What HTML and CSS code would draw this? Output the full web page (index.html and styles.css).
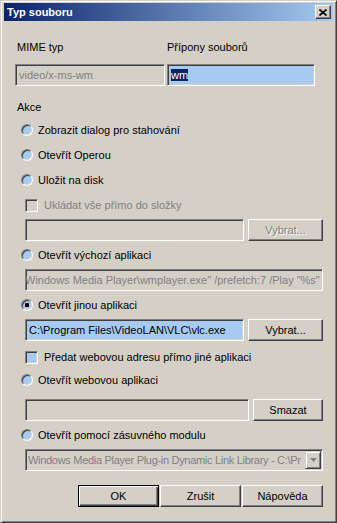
FILE: index.html
```html
<!DOCTYPE html>
<html lang="cs">
<head>
    <meta charset="UTF-8">
    <title>Typ souboru</title>
    <link rel="stylesheet" href="styles.css">
</head>
<body>
    <div class="window">
        <div class="titlebar">
            <span class="title">Typ souboru</span>
            <span class="close">
                <svg width="8" height="7" viewBox="0 0 8 7"><path d="M0.5 0.5 L7.5 6.5 M7.5 0.5 L0.5 6.5" stroke="#000" stroke-width="1.6" fill="none"/></svg>
            </span>
        </div>

        <div class="dialog">
            <div class="mime">
                <span class="label first">MIME typ</span>
                <span class="label">Přípony souborů</span>
                <div class="field disabled">video/x-ms-wm</div>
                <div class="field active"><span class="selected">wm</span></div>
            </div>

            <div class="group-title">Akce</div>

            <div class="actions">
                <div class="option"><span class="radio"></span>Zobrazit dialog pro stahování</div>
                <div class="option"><span class="radio"></span>Otevřít Operou</div>
                <div class="option"><span class="radio"></span>Uložit na disk</div>
                <div class="option check disabled"><span class="checkbox"></span>Ukládat vše přímo do složky</div>
                <div class="row">
                    <div class="field disabled"></div>
                    <button class="btn pick" disabled>Vybrat...</button>
                </div>

                <div class="option after"><span class="radio"></span>Otevřít výchozí aplikaci</div>
                <div class="row">
                    <div class="field disabled"><span class="cut">Windows Media Player\wmplayer.exe" /prefetch:7 /Play "%s"</span></div>
                </div>

                <div class="option after"><span class="radio checked"></span>Otevřít jinou aplikaci</div>
                <div class="row">
                    <div class="field active">C:\Program Files\VideoLAN\VLC\vlc.exe</div>
                    <button class="btn pick">Vybrat...</button>
                </div>
                <div class="option check after-check"><span class="checkbox on"></span>Předat webovou adresu přímo jiné aplikaci</div>

                <div class="option"><span class="radio"></span>Otevřít webovou aplikaci</div>
                <div class="row web">
                    <div class="field disabled"></div>
                    <button class="btn clear">Smazat</button>
                </div>

                <div class="option after"><span class="radio"></span>Otevřít pomocí zásuvného modulu</div>
                <div class="row">
                    <div class="select">
                        <span class="select-text">Windows Media Player Plug-in Dynamic Link Library - C:\Pr</span>
                        <span class="arrow">
                            <svg width="7" height="4" viewBox="0 0 7 4"><path d="M0 0 H7 L3.5 4 Z" fill="#808080"/></svg>
                        </span>
                    </div>
                </div>
            </div>

            <div class="buttons">
                <button class="btn default">OK</button>
                <button class="btn">Zrušit</button>
                <button class="btn">Nápověda</button>
            </div>
        </div>
    </div>
</body>
</html>
```

FILE: styles.css
```css
body {
    margin: 0;
    padding: 0;
    font-family: 'Liberation Sans', Arial, sans-serif;
    font-size: 11px;
    color: #000;
    background: #d4d0c8;
}

.window {
    width: 337px;
    height: 523px;
    box-sizing: border-box;
    background: #d4d0c8;
    border: 1px solid;
    border-color: #d4d0c8 #404040 #404040 #d4d0c8;
    box-shadow: inset 1px 1px #fff, inset -1px -1px #808080;
    padding: 2px 3px 3px 3px;
}

.titlebar {
    height: 18px;
    background: linear-gradient(to right, #0a246a, #a6caf0);
    display: flex;
    align-items: center;
    justify-content: space-between;
}

.title {
    color: #fff;
    font-weight: bold;
    font-size: 11px;
    padding-left: 3px;
}

.close {
    width: 16px;
    height: 14px;
    box-sizing: border-box;
    margin-right: 2px;
    background: #d4d0c8;
    border: 1px solid;
    border-color: #fff #404040 #404040 #fff;
    box-shadow: inset -1px -1px #808080;
    display: flex;
    align-items: center;
    justify-content: center;
}

.dialog {
    padding: 0 10px 0 11px;
}

.mime {
    display: grid;
    grid-template-columns: 150px 148px;
    column-gap: 2px;
    row-gap: 10px;
    margin-top: 19px;
}

.label {
    height: 14px;
    line-height: 14px;
}

.label.first {
    padding-left: 2px;
}

.field {
    height: 22px;
    min-width: 0;
    box-sizing: border-box;
    background: #fff;
    border: 1px solid;
    border-color: #808080 #fff #fff #808080;
    box-shadow: inset 1px 1px #404040, inset -1px -1px #d4d0c8;
    padding: 0 3px;
    display: flex;
    align-items: center;
    white-space: nowrap;
    overflow: hidden;
}

.field.disabled {
    background: #d4d0c8;
    color: #808080;
}

.field.active {
    background: #a6caf0;
}

.selected {
    background: #0a246a;
    color: #fff;
}

.cut {
    margin-left: -4px;
}

.group-title {
    height: 14px;
    line-height: 14px;
    margin-top: 14px;
    padding-left: 2px;
}

.actions {
    display: flex;
    flex-direction: column;
    margin-top: 8px;
}

.option {
    height: 16px;
    display: flex;
    align-items: center;
    padding-left: 6px;
    margin-top: 9px;
}

.option:first-child {
    margin-top: 0;
}

.option.after {
    margin-top: 6px;
}

.option.after-check {
    margin-top: 8px;
}

.option.after-check + .option {
    margin-top: 7px;
}

.option.check {
    padding-left: 10px;
}

.option.disabled {
    color: #808080;
}

.radio {
    width: 12px;
    height: 12px;
    box-sizing: border-box;
    border-radius: 50%;
    background: #a6caf0;
    border: 1px solid;
    border-color: #808080 #fff #fff #808080;
    box-shadow: inset 1px 1px #404040, inset -1px -1px #d4d0c8;
    margin-right: 5px;
    flex-shrink: 0;
}

.radio.checked {
    background: radial-gradient(circle, #000 0 2px, #a6caf0 2.5px);
}

.checkbox {
    width: 13px;
    height: 13px;
    box-sizing: border-box;
    background: #d4d0c8;
    border: 1px solid;
    border-color: #808080 #fff #fff #808080;
    box-shadow: inset 1px 1px #404040, inset -1px -1px #d4d0c8;
    margin-right: 6px;
    flex-shrink: 0;
}

.checkbox.on {
    background: #a6caf0;
}

.row {
    display: flex;
    gap: 4px;
    margin-top: 6px;
    padding-left: 10px;
}

.row.web {
    margin-top: 11px;
}

.row .field {
    flex: 1;
}

.btn {
    height: 22px;
    box-sizing: border-box;
    background: #d4d0c8;
    font-family: 'Liberation Sans', Arial, sans-serif;
    font-size: 11px;
    color: #000;
    border: 1px solid;
    border-color: #fff #404040 #404040 #fff;
    box-shadow: inset -1px -1px #808080, inset 1px 1px #d4d0c8;
    padding: 0;
    flex-shrink: 0;
}

.btn:disabled {
    color: #808080;
    text-shadow: 1px 1px #fff;
}

.btn.pick {
    width: 75px;
}

.btn.clear {
    width: 70px;
}

.select {
    flex: 1;
    min-width: 0;
    height: 22px;
    box-sizing: border-box;
    background: #d4d0c8;
    color: #808080;
    border: 1px solid;
    border-color: #808080 #fff #fff #808080;
    box-shadow: inset 1px 1px #404040, inset -1px -1px #d4d0c8;
    padding: 1px 1px 1px 2px;
    display: flex;
    align-items: center;
    gap: 1px;
}

.select-text {
    flex: 1;
    min-width: 0;
    white-space: nowrap;
    overflow: hidden;
    letter-spacing: -0.3px;
}

.arrow {
    width: 16px;
    height: 18px;
    box-sizing: border-box;
    background: #d4d0c8;
    border: 1px solid;
    border-color: #d4d0c8 #404040 #404040 #d4d0c8;
    box-shadow: inset 1px 1px #fff, inset -1px -1px #808080;
    display: flex;
    align-items: center;
    justify-content: center;
    flex-shrink: 0;
}

.buttons {
    display: flex;
    justify-content: flex-end;
    gap: 1px;
    margin-top: 14px;
}

.buttons .btn {
    width: 81px;
}

.btn.default {
    border: 1px solid #000;
    box-shadow: inset 1px 1px #fff, inset -1px -1px #404040, inset -2px -2px #808080;
}
```
